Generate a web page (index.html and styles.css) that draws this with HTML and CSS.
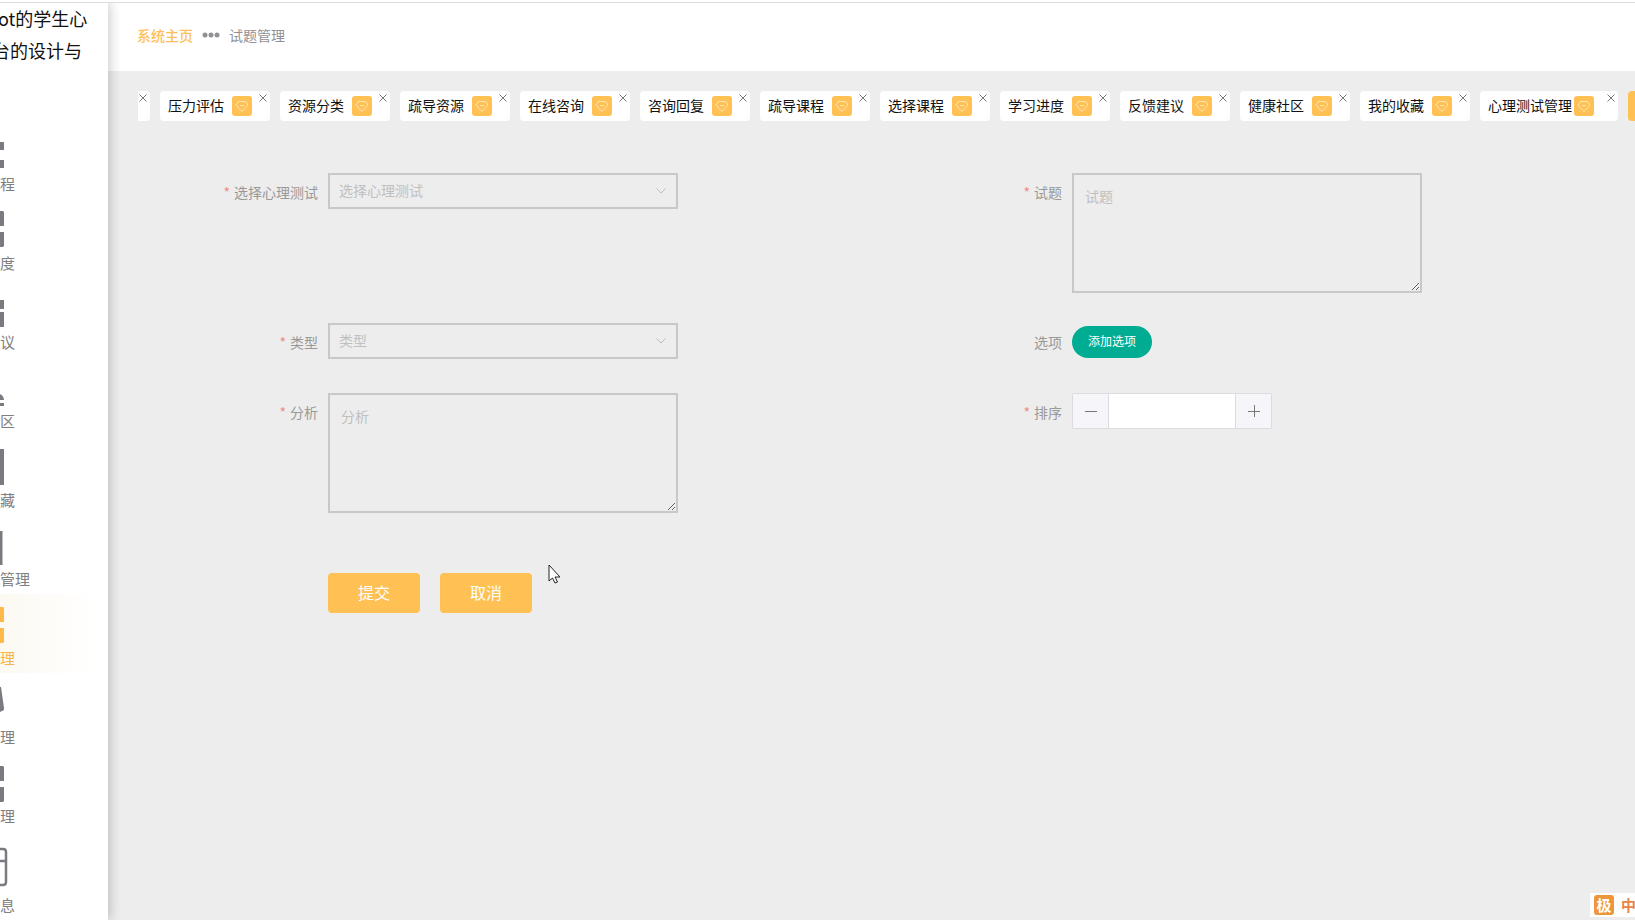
FILE: index.html
```html
<!DOCTYPE html>
<html lang="zh-CN">
<head>
<meta charset="utf-8">
<title>试题管理</title>
<link rel="stylesheet" href="styles.css">
</head>
<body>
<svg class="defs" aria-hidden="true">
  <symbol id="gem" viewBox="0 0 20 20"><path d="M6.500 5.500h7l2.500 3.500-6 6.500L4 9zM8 9.500h4" fill="none" stroke="#ffe6b5" stroke-width="1"/></symbol>
  <symbol id="close" viewBox="0 0 10 10"><path d="M1.500 1.500l7 7M8.500 1.500l-7 7" fill="none" stroke="currentColor" stroke-width="1"/></symbol>
  <symbol id="arrow" viewBox="0 0 12 8"><path d="M1.500 1.500L6 6l4.500-4.500" fill="none" stroke="currentColor" stroke-width="1"/></symbol>
</svg>
<div class="app">
  <aside class="sidebar">
    <h1 class="title"><span class="line first">ot的学生心</span><span class="line second">台的设计与</span></h1>
    <nav class="menu">
      <a class="item" href="#"><svg class="icon" viewBox="0 0 8 40"><path d="M0 12h4v8H0zM0 30h4v8H0z"/></svg><span>程</span></a>
      <a class="item" href="#"><svg class="icon" viewBox="0 0 8 40"><path d="M0 2h3l1 1v14H0zM0 23h4v14l-1 1H0z"/></svg><span>度</span></a>
      <a class="item" href="#"><svg class="icon" viewBox="0 0 8 40"><path d="M0 12h4v9H0zM0 24h4v15H0z"/></svg><span>议</span></a>
      <a class="item" href="#"><svg class="icon" viewBox="0 0 8 40"><path d="M0 27c2 1 4 3 4 6H0zM0 36h4v3H0z"/></svg><span>区</span></a>
      <a class="item" href="#"><svg class="icon" viewBox="0 0 8 40"><path d="M0 3h4v36H0z"/></svg><span>藏</span></a>
      <a class="item" href="#"><svg class="icon" viewBox="0 0 8 40"><path d="M0 6h2.500v34H0z"/></svg><span>管理</span></a>
      <a class="item active" href="#"><svg class="icon" viewBox="0 0 8 40"><path d="M0 3h3l1 1v14H0zM0 24h4v14l-1 1H0z"/></svg><span>理</span></a>
      <a class="item" href="#"><svg class="icon" viewBox="0 0 8 40"><path d="M0 4h1l3 21q0 3-2 3l-2 1z"/></svg><span>理</span></a>
      <a class="item" href="#"><svg class="icon" viewBox="0 0 8 40"><path d="M0 4h3l1 1v14H0zM0 25h4v14l-1 1H0z"/></svg><span>理</span></a>
      <a class="item" href="#"><svg class="icon tall" viewBox="0 0 8 50"><path d="M0 8h3q3 0 3 3v30q0 3-3 3H0M0 20h6" fill="none" stroke="currentColor" stroke-width="2.500"/></svg><span>息</span></a>
    </nav>
  </aside>
  <div class="content">
    <header class="header">
      <a class="home" href="#">系统主页</a>
      <svg class="dots" viewBox="0 0 18 6"><circle cx="3" cy="3" r="2.500"/><circle cx="9" cy="3" r="2.500"/><circle cx="15" cy="3" r="2.500"/></svg>
      <span>试题管理</span>
    </header>
    <main class="main">
      <div class="tabs">
        <div class="tab cut"><button class="close" aria-label="关闭"><svg><use href="#close"/></svg></button></div>
        <div class="tab"><span class="name">压力评估</span><svg class="gem"><use href="#gem"/></svg><button class="close" aria-label="关闭"><svg><use href="#close"/></svg></button></div>
        <div class="tab"><span class="name">资源分类</span><svg class="gem"><use href="#gem"/></svg><button class="close" aria-label="关闭"><svg><use href="#close"/></svg></button></div>
        <div class="tab"><span class="name">疏导资源</span><svg class="gem"><use href="#gem"/></svg><button class="close" aria-label="关闭"><svg><use href="#close"/></svg></button></div>
        <div class="tab"><span class="name">在线咨询</span><svg class="gem"><use href="#gem"/></svg><button class="close" aria-label="关闭"><svg><use href="#close"/></svg></button></div>
        <div class="tab"><span class="name">咨询回复</span><svg class="gem"><use href="#gem"/></svg><button class="close" aria-label="关闭"><svg><use href="#close"/></svg></button></div>
        <div class="tab"><span class="name">疏导课程</span><svg class="gem"><use href="#gem"/></svg><button class="close" aria-label="关闭"><svg><use href="#close"/></svg></button></div>
        <div class="tab"><span class="name">选择课程</span><svg class="gem"><use href="#gem"/></svg><button class="close" aria-label="关闭"><svg><use href="#close"/></svg></button></div>
        <div class="tab"><span class="name">学习进度</span><svg class="gem"><use href="#gem"/></svg><button class="close" aria-label="关闭"><svg><use href="#close"/></svg></button></div>
        <div class="tab"><span class="name">反馈建议</span><svg class="gem"><use href="#gem"/></svg><button class="close" aria-label="关闭"><svg><use href="#close"/></svg></button></div>
        <div class="tab"><span class="name">健康社区</span><svg class="gem"><use href="#gem"/></svg><button class="close" aria-label="关闭"><svg><use href="#close"/></svg></button></div>
        <div class="tab"><span class="name">我的收藏</span><svg class="gem"><use href="#gem"/></svg><button class="close" aria-label="关闭"><svg><use href="#close"/></svg></button></div>
        <div class="tab wide"><span class="name">心理测试管理</span><svg class="gem"><use href="#gem"/></svg><button class="close" aria-label="关闭"><svg><use href="#close"/></svg></button></div>
        <div class="tab current"></div>
      </div>
      <form class="form">
        <div class="field">
          <label class="label required" for="test">选择心理测试</label>
          <div class="select"><select id="test"><option>选择心理测试</option></select><svg class="arrow"><use href="#arrow"/></svg></div>
        </div>
        <div class="field">
          <label class="label required" for="question">试题</label>
          <textarea id="question" placeholder="试题"></textarea>
        </div>
        <div class="field">
          <label class="label required" for="type">类型</label>
          <div class="select"><select id="type"><option>类型</option></select><svg class="arrow"><use href="#arrow"/></svg></div>
        </div>
        <div class="field">
          <label class="label" for="add">选项</label>
          <button class="add" id="add" type="button">添加选项</button>
        </div>
        <div class="field">
          <label class="label required" for="analysis">分析</label>
          <textarea id="analysis" placeholder="分析"></textarea>
        </div>
        <div class="field">
          <label class="label required" for="order">排序</label>
          <div class="number">
            <button type="button" aria-label="减少"><svg viewBox="0 0 12 12"><path d="M0 6.500h12"/></svg></button>
            <input id="order" type="text">
            <button type="button" aria-label="增加"><svg viewBox="0 0 12 12"><path d="M0 6.500h12M6.500 0v12"/></svg></button>
          </div>
        </div>
        <div class="actions">
          <button class="action" type="submit">提交</button>
          <button class="action" type="button">取消</button>
        </div>
      </form>
    </main>
  </div>
</div>
<svg class="cursor" viewBox="0 0 14 20"><path d="M1 1v16l3.500-3 2.500 5 2.500-1-2.500-5H12z" fill="#fff" stroke="#222"/></svg>
<div class="ime"><span class="logo">极</span><span>中</span></div>
</body>
</html>
```
FILE: styles.css
```css
* { box-sizing: border-box; }
body {
  margin: 0;
  height: 100vh;
  overflow: hidden;
  font: 14px/20px "Noto Sans CJK SC", sans-serif;
  color: #909096;
  background: #fff;
}
button, input, select, textarea { font: inherit; margin: 0; padding: 0; border: 0; }
a { color: inherit; text-decoration: none; }
.defs { display: none; }
.app {
  display: flex;
  height: 100%;
  padding-top: 2px;
}
.app::before {
  content: "";
  position: absolute;
  top: 2px;
  left: 0;
  right: 0;
  height: 1px;
  background: #ddd;
  z-index: 2;
}
.sidebar {
  position: relative;
  z-index: 1;
  flex: 0 0 108px;
  background: #fff;
  box-shadow: 1px 0 12px rgba(0, 0, 0, .24);
  clip-path: inset(0 -24px 0 0);
}
.title {
  height: 118px;
  margin: 0;
  font-size: 18px;
  font-weight: 400;
  line-height: 32px;
  color: #111;
  white-space: nowrap;
}
.line { display: block; }
.first { margin-left: -2px; }
.second { margin-left: -8px; }
.item {
  display: flex;
  flex-direction: column;
  gap: 2px;
  padding: 10px 0 3px;
  font-size: 15px;
  line-height: 24px;
  color: #808080;
}
.icon { width: 8px; height: 40px; fill: #7c7a80; color: #7c7a80; }
.tall { height: 50px; }
.active {
  color: #f3b54c;
  background: linear-gradient(90deg, #fcf9f2, #fff 90%);
}
.active .icon { fill: #ffb84a; }
.content {
  flex: 1;
  min-width: 0;
  display: flex;
  flex-direction: column;
}
.header {
  height: 69px;
  display: flex;
  align-items: center;
  gap: 9px;
  padding: 0 0 3px 29px;
}
.home { color: #ffbe57; font-weight: 500; }
.dots { width: 18px; height: 6px; fill: #909096; }
.main {
  flex: 1;
  padding: 20px 0 0 30px;
  background: #ededed;
}
.tabs {
  display: flex;
  gap: 10px;
  overflow: hidden;
}
.tab {
  position: relative;
  flex: none;
  display: flex;
  align-items: center;
  height: 30px;
  padding: 0 18px 0 8px;
  border-radius: 4px;
  background: #fff;
  color: #111;
}
.name { min-width: 64px; padding-bottom: 2px; white-space: nowrap; }
.wide { gap: 2px; padding-right: 24px; }
.gem {
  width: 20px;
  height: 20px;
  border-radius: 3px;
  background: #ffc153;
}
.cut { width: 12px; padding: 0; border-radius: 0 4px 4px 0; }
.current { width: 120px; background: #ffc153; }
.close {
  position: absolute;
  top: 2px;
  right: 2px;
  width: 10px;
  height: 10px;
  background: none;
  color: #777;
}
.close svg { display: block; width: 10px; height: 10px; }
.form {
  display: grid;
  grid-template-columns: 1fr 1fr;
  row-gap: 30px;
  padding: 52px 9px 0 0;
}
.field {
  display: flex;
  align-items: flex-start;
  min-height: 40px;
}
.label {
  flex: 0 0 190px;
  padding-right: 10px;
  line-height: 38px;
  text-align: right;
  color: #999;
}
.required::before { content: "*"; margin-right: 4px; color: #ee8a8a; }
.select { position: relative; width: 350px; }
select {
  appearance: none;
  display: block;
  width: 100%;
  height: 36px;
  padding: 0 30px 2px 9px;
  border: 2px solid #c8c8c8;
  border-radius: 0;
  background: transparent;
  color: #c0c0c0;
}
.arrow {
  position: absolute;
  top: 14px;
  right: 11px;
  width: 12px;
  height: 8px;
  color: #bbb;
  pointer-events: none;
}
textarea {
  width: 350px;
  height: 120px;
  padding: 11px;
  border: 2px solid #c8c8c8;
  background: transparent;
}
textarea::placeholder { color: #c0c0c0; }
.add {
  width: 80px;
  height: 32px;
  margin-top: 3px;
  padding-bottom: 2px;
  border-radius: 16px;
  background: #00ac92;
  color: #fff;
  font-size: 12px;
}
.number {
  display: flex;
  width: 200px;
  height: 36px;
  border: 1px solid #dcdcdf;
  border-radius: 2px;
}
.number button { width: 35px; background: #f5f5fa; }
.number svg { display: block; width: 12px; height: 12px; margin: auto; stroke: #777; }
.number input {
  flex: 1;
  min-width: 0;
  border: solid #dcdcdf;
  border-width: 0 1px;
  background: #fff;
}
.actions {
  grid-column: 1 / -1;
  display: flex;
  gap: 20px;
  padding: 30px 0 0 190px;
}
.action {
  width: 92px;
  height: 40px;
  padding-bottom: 2px;
  border-radius: 4px;
  background: #ffc153;
  color: #fff;
  font-size: 16px;
}
.cursor { position: absolute; left: 548px; top: 564px; width: 14px; height: 20px; }
.ime {
  position: absolute;
  right: 0;
  bottom: 3px;
  width: 45px;
  height: 24px;
  display: flex;
  align-items: center;
  gap: 7px;
  padding-left: 4px;
  overflow: hidden;
  background: #fff;
  color: #e98546;
  font-size: 15px;
  font-weight: 700;
}
.logo {
  flex: none;
  width: 20px;
  height: 20px;
  border-radius: 3px;
  background: #ee963a;
  color: #fff;
  text-align: center;
}
```
